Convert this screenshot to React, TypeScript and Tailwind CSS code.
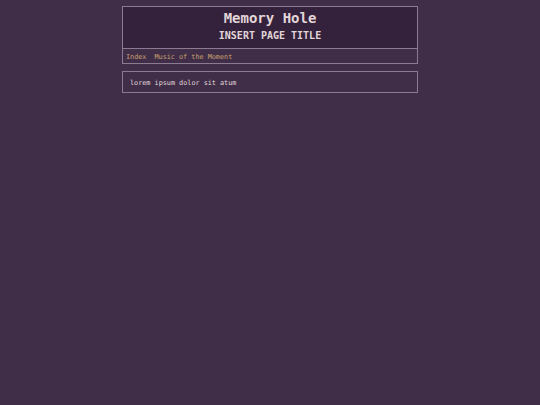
export default function App() {
  return (
    <div
      className="min-h-[405px] w-full bg-[#402e48] pt-[6px]"
      style={{ fontFamily: '"DejaVu Sans Mono", monospace' }}
    >
      <div className="mx-auto w-[296px]">
        <header className="border border-[#8c7a92]">
          <div className="bg-[#34223c] pt-[2px] pb-[5px] text-center font-bold text-[#e2d6d8]">
            <h1 className="text-[14px] leading-[18px]">Memory Hole</h1>
            <h2 className="mt-[2px] text-[10px] leading-[14px]">INSERT PAGE TITLE</h2>
          </div>
          <nav className="flex gap-[8px] border-t border-[#8c7a92] px-[3px] pt-[4px] pb-[2px] text-[6.8px] leading-[8px] text-[#c8a070]">
            <a>Index</a>
            <a>Music of the Moment</a>
          </nav>
        </header>
        <main className="mt-[7px] border border-[#8c7a92] px-[7px] pt-[7px] pb-[5px] text-[6.8px] leading-[8px] text-[#e0d6dc]">
          lorem ipsum dolor sit atum
        </main>
      </div>
    </div>
  );
}
